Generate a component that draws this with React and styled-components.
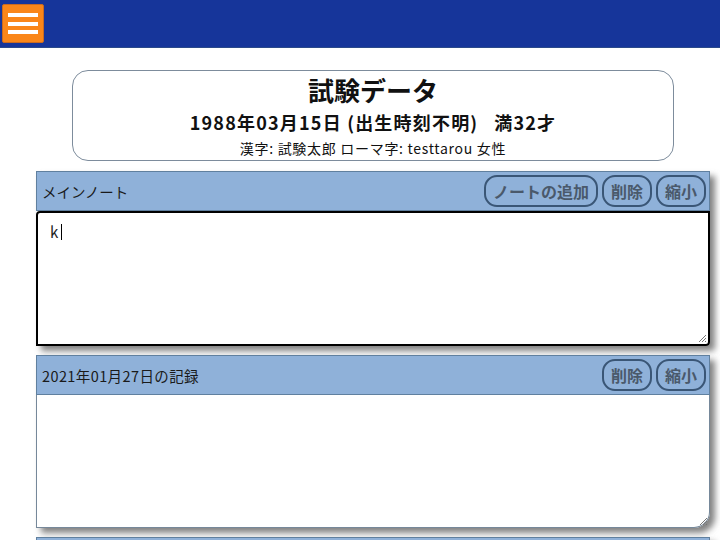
import * as React from 'react'
import styled, { createGlobalStyle } from 'styled-components'

const Global = createGlobalStyle`
    html, body {
        margin: 0;
        padding: 0;
        background: #ffffff;
        font-family: "Noto Sans CJK JP", "Noto Sans", sans-serif;
    }
`;

const TopBar = styled.header`
    background-color: #16359a;
    height: 48px;
    padding: 4px 0 0 2px;
    box-sizing: border-box;
    border-bottom: 1px solid #2b4a8a;
`;
const MenuButton = styled.button`
    width: 42px;
    height: 39px;
    background-color: #fa8619;
    border: 1px solid #c96a20;
    border-radius: 2px;
    padding: 8px 5px;
    display: flex;
    flex-direction: column;
    justify-content: space-between;
    align-items: center;
    box-sizing: border-box;
`;
const MenuLine = styled.span`
    display: block;
    width: 30px;
    height: 4px;
    background: #ffffff;
`;

const Main = styled.main`
    padding: 22px 10px 0 36px;
`;
const InfoCard = styled.section`
    width: 602px;
    height: 91px;
    margin: 0 auto;
    border: 1px solid #7d8c9c;
    border-radius: 16px;
    box-sizing: border-box;
    text-align: center;
    padding-top: 1px;
    color: #111;
`;
const Title = styled.h1`
    margin: 0;
    font-size: 26px;
    font-weight: 700;
    line-height: 35px;
`;
const Birth = styled.div`
    font-size: 18px;
    font-weight: 700;
    line-height: 31px;
    letter-spacing: 1.2px;
`;
const Names = styled.div`
    font-size: 14px;
    line-height: 21px;
    letter-spacing: 0.7px;
`;

const Panel = styled.section`
    margin-top: ${p => p.gap}px;
    box-shadow: 5px 5px 6px rgba(90, 90, 90, 0.75);
    border-bottom-right-radius: ${p => p.round ? '16px' : '4px'};
`;
const PanelHead = styled.div`
    height: 40px;
    box-sizing: border-box;
    background-color: #8fb1d9;
    border: 1px solid #60809f;
    display: flex;
    align-items: center;
    padding: 0 3px 0 5px;
    gap: 4px;
`;
const PanelTitle = styled.span`
    flex: 1;
    font-size: 14.5px;
    color: #1a1a1a;
    letter-spacing: ${p => p.wide ? '0.4px' : '0'};
`;
const HeadButton = styled.button`
    height: 32px;
    padding: 0 7px;
    border: 2px solid #3a5676;
    border-radius: 13px;
    background: transparent;
    font-family: "Noto Sans CJK JP", sans-serif;
    font-size: 16px;
    font-weight: 700;
    color: #4a596b;
`;
const NoteArea = styled.div`
    height: ${p => p.h}px;
    box-sizing: border-box;
    background: #ffffff;
    border: ${p => p.focused ? '2px solid #000' : '1px solid #76889a'};
    border-top: ${p => p.focused ? '2px solid #000' : 'none'};
    border-radius: ${p => p.focused ? '4px 0 4px 0' : '0 0 16px 0'};
    padding: 8px 12px;
    font-size: 15px;
    color: #222;
    position: relative;
`;
const Caret = styled.span`
    display: inline-block;
    width: 1px;
    height: 16px;
    background: #000;
    margin-left: 3px;
    vertical-align: -2px;
`;
const Grip = styled.svg`
    position: absolute;
    right: 1px;
    bottom: 1px;
`;

export default function App() {
    return (
        <>
            <Global />
            <TopBar>
                <MenuButton>
                    <MenuLine />
                    <MenuLine />
                    <MenuLine />
                </MenuButton>
            </TopBar>
            <Main>
                <InfoCard>
                    <Title>試験データ</Title>
                    <Birth>1988年03月15日 (出生時刻不明)&nbsp;&nbsp; 満32才</Birth>
                    <Names>漢字: 試験太郎 ローマ字: testtarou 女性</Names>
                </InfoCard>
                <Panel gap={10}>
                    <PanelHead>
                        <PanelTitle>メインノート</PanelTitle>
                        <HeadButton>ノートの追加</HeadButton>
                        <HeadButton>削除</HeadButton>
                        <HeadButton>縮小</HeadButton>
                    </PanelHead>
                    <NoteArea focused h={135}>
                        k<Caret />
                        <Grip width="9" height="9" viewBox="0 0 9 9">
                            <path d="M8 1L1 8M8 4L4 8M8 7L7 8" stroke="#777" strokeWidth="1" />
                        </Grip>
                    </NoteArea>
                </Panel>
                <Panel gap={9} round>
                    <PanelHead>
                        <PanelTitle wide>2021年01月27日の記録</PanelTitle>
                        <HeadButton>削除</HeadButton>
                        <HeadButton>縮小</HeadButton>
                    </PanelHead>
                    <NoteArea h={133}>
                        <Grip width="9" height="9" viewBox="0 0 9 9">
                            <path d="M8 1L1 8M8 4L4 8M8 7L7 8" stroke="#777" strokeWidth="1" />
                        </Grip>
                    </NoteArea>
                </Panel>
                <Panel gap={9}>
                    <PanelHead />
                </Panel>
            </Main>
        </>
    )
}
